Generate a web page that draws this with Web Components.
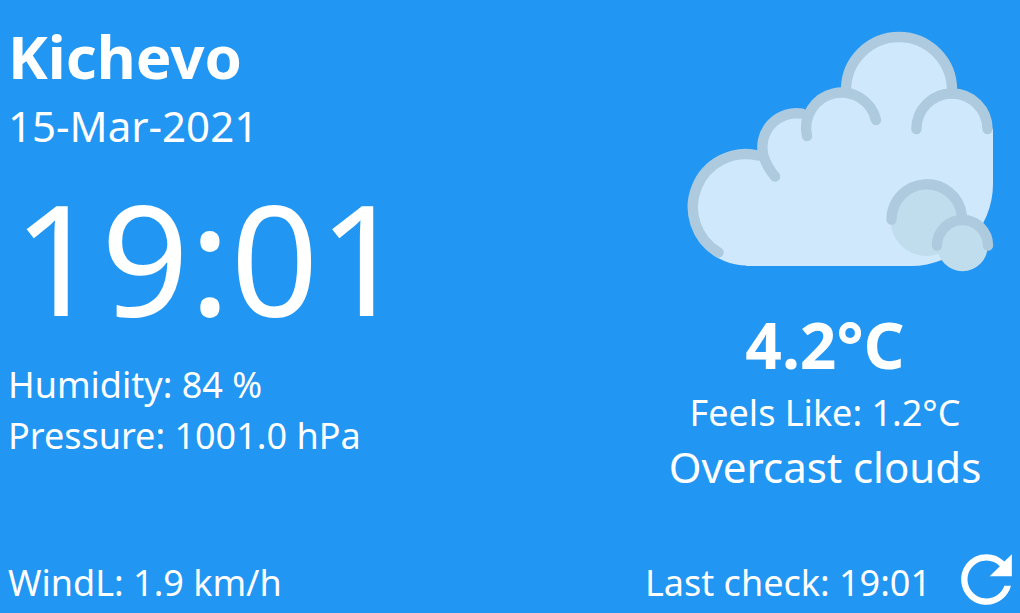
<!DOCTYPE html>
<html lang="en">
<head>
<meta charset="utf-8">
<meta name="viewport" content="width=device-width, initial-scale=1">
<title>Weather</title>
<style>
  body { margin: 0; background: #2196f3; color: #fff; font-family: "Noto Sans", "Open Sans", sans-serif; }
</style>
</head>
<body>
<weather-panel>
  <place-clock slot="place" city="Kichevo" date="15-Mar-2021" time="19:01"></place-clock>
  <weather-reading slot="readings" label="Humidity" value="84 %"></weather-reading>
  <weather-reading slot="readings" label="Pressure" value="1001.0 hPa"></weather-reading>
  <cloud-icon slot="now"></cloud-icon>
  <current-conditions slot="now">
    <span slot="temperature">4.2°C</span>
    <weather-reading slot="feels" label="Feels Like" value="1.2°C"></weather-reading>
    <span slot="summary">Overcast clouds</span>
  </current-conditions>
  <weather-reading slot="wind" label="WindL" value="1.9 km/h"></weather-reading>
  <weather-reading slot="check" label="Last check" value="19:01"></weather-reading>
  <refresh-button slot="check"></refresh-button>
</weather-panel>

<script>
class BaseElement extends HTMLElement {
  render(html) {
    const t = document.createElement('template');
    t.innerHTML = html;
    this.attachShadow({ mode: 'open' }).append(t.content.cloneNode(true));
  }
  fill(id) { this.shadowRoot.getElementById(id).textContent = this.getAttribute(id); }
}

customElements.define('weather-panel', class extends BaseElement {
  connectedCallback() {
    this.render(`<style>
      :host { display: flex; flex-direction: column; min-height: 100vh; box-sizing: border-box; padding: 20px 5px 5px 8px; }
      main { flex: 1; display: flex; justify-content: space-between; }
      .readings { margin-top: 11px; }
      .now { width: 350px; margin-right: 15px; }
      footer { display: flex; justify-content: space-between; align-items: flex-end; }
      .check { display: flex; align-items: flex-end; gap: 27px; }
    </style>
    <main>
      <section><slot name="place"></slot><div class="readings"><slot name="readings"></slot></div></section>
      <section class="now"><slot name="now"></slot></section>
    </main>
    <footer><slot name="wind"></slot><div class="check"><slot name="check"></slot></div></footer>`);
  }
});

customElements.define('place-clock', class extends BaseElement {
  connectedCallback() {
    this.render(`<style>
      :host { display: block; }
      h1, p { margin: 0; white-space: nowrap; }
      h1 { font-size: 60px; line-height: 72px; font-weight: 700; }
      #date { font-size: 42px; line-height: 56px; margin-top: 6px; }
      #time { display: block; font-size: 154px; line-height: 184px; margin: 10px 0 0 5px; }
    </style>
    <h1 id="city"></h1><p id="date"></p><time id="time"></time>`);
    ['city', 'date', 'time'].forEach(id => this.fill(id));
  }
});

customElements.define('weather-reading', class extends BaseElement {
  connectedCallback() {
    this.render(`<style>
      :host { display: block; font-size: 36px; line-height: 51px; white-space: nowrap; }
    </style><span id="label"></span>: <span id="value"></span>`);
    this.fill('label'); this.fill('value');
  }
});

customElements.define('current-conditions', class extends BaseElement {
  connectedCallback() {
    this.render(`<style>
      :host { display: block; margin-top: 28px; text-align: center; white-space: nowrap; }
      .temp { font-size: 64px; line-height: 74px; font-weight: 700; }
      .feels { margin-top: 5px; font-weight: 400; }
      .summary { font-size: 42px; line-height: 58px; }
    </style>
    <div class="temp"><slot name="temperature"></slot></div>
    <div class="feels"><slot name="feels"></slot></div>
    <div class="summary"><slot name="summary"></slot></div>`);
  }
});

customElements.define('cloud-icon', class extends BaseElement {
  connectedCallback() {
    this.render(`<style>
      :host { display: block; }
      svg { display: block; width: 340px; height: 260px; margin: 0 auto; }
    </style>
    <svg viewBox="-25 0 340 260" role="img" aria-label="Overcast clouds">
      <g fill="#d0e8fc">
        <circle cx="66.5" cy="187.5" r="58"/><circle cx="116" cy="127" r="37"/>
        <circle cx="161" cy="108" r="38"/><circle cx="219" cy="70" r="56"/><circle cx="272" cy="109" r="39"/>
        <path d="M66 246H231A82 82 0 0 0 313 164V109L219 70L161 108L116 127L66 140Z"/>
      </g>
      <g fill="none" stroke="#adcade" stroke-width="10.4" stroke-linecap="round">
        <path d="M38.500 232.500A53 53 0 0 1 78 135.500"/>
        <path d="M95 156.500A59 59 0 0 1 83.500 136A34 34 0 0 1 122 93.700"/>
        <path stroke-linecap="butt" d="M166 70A53 53 0 0 1 272 70"/>
        <path d="M127 116A35.400 35.400 0 0 1 196 100"/>
        <path d="M236.400 109A35.500 35.500 0 0 1 307.500 109"/>
      </g>
      <circle cx="246.500" cy="200" r="36" fill="#c0ddee"/>
      <path d="M211.500 199.500A35.300 35.300 0 0 1 281.800 195" fill="none" stroke="#adcade" stroke-width="10.4" stroke-linecap="round"/>
      <circle cx="282.500" cy="226" r="25.200" fill="#c0ddee"/>
      <path d="M257 225.500A25.500 25.500 0 0 1 308 225.500" fill="none" stroke="#adcade" stroke-width="10.400" stroke-linecap="round"/>
    </svg>`);
  }
});

customElements.define('refresh-button', class extends BaseElement {
  connectedCallback() {
    this.render(`<style>
      :host { display: block; }
      button { display: block; padding: 0; border: 0; background: none; color: inherit; cursor: pointer; }
      svg { display: block; width: 57px; height: 57px; }
    </style>
    <button type="button" aria-label="Refresh"><svg viewBox="3 3 18 18" fill="currentColor"><path d="M17.650 6.350A7.958 7.958 0 0 0 12 4c-4.420 0-7.990 3.580-7.990 8s3.570 8 7.990 8c3.730 0 6.840-2.550 7.730-6h-2.080A5.990 5.990 0 0 1 12 18c-3.310 0-6-2.690-6-6s2.690-6 6-6c1.660 0 3.140.690 4.220 1.780L13 11h7V4z"/></svg></button>`);
  }
});
</script>
</body>
</html>
